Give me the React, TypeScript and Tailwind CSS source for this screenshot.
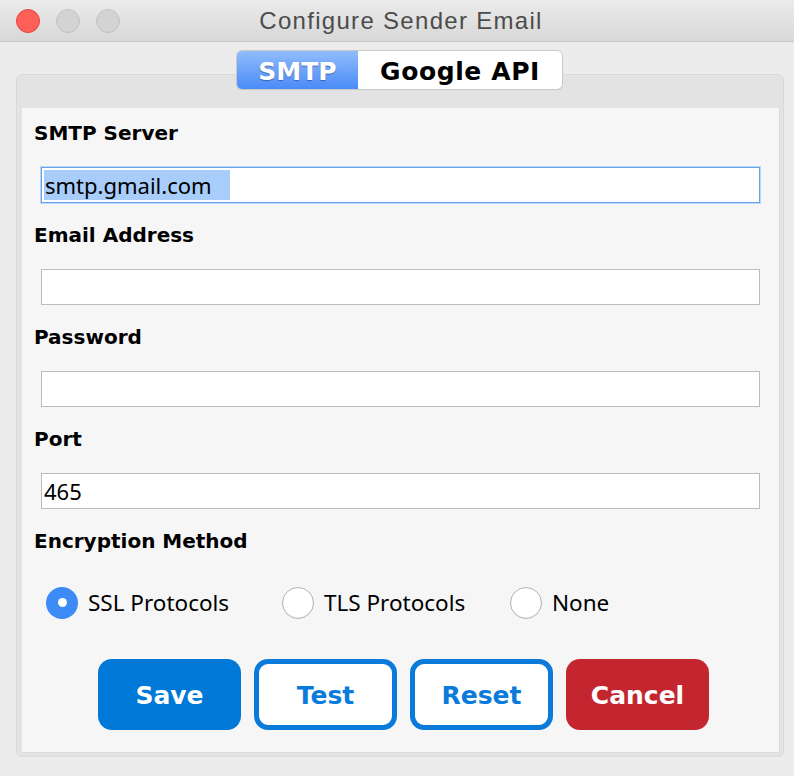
import React from "react";

const dv = { fontFamily: '"DejaVu Sans", Verdana, sans-serif' };
const noto = { fontFamily: '"Noto Sans", "Open Sans", sans-serif' };

function Field({ label, value, focused, selected }: { label: string; value?: string; focused?: boolean; selected?: boolean }) {
  return (
    <div className="mb-[20px]">
      <div className="h-[24px] px-[12px] text-[20px] leading-[24px] font-bold text-black" style={dv}>
        {label}
      </div>
      <div
        className={
          "mx-[19px] mt-[22px] h-[36px] bg-white flex items-center px-[2px] text-[22px] text-black " +
          (focused
            ? "border border-[#6aa2ea] shadow-[0_0_0_1px_#b9d5f8]"
            : "border border-[#bcbcbc]")
        }
        style={noto}
      >
        {value ? (
          selected ? (
            <span className="bg-[#a9cdfb] w-[186px] h-[30px] leading-[30px] pl-[1px]">{value}</span>
          ) : (
            <span className="leading-[30px]">{value}</span>
          )
        ) : null}
      </div>
    </div>
  );
}

function Radio({ label, checked, width }: { label: string; checked?: boolean; width?: string }) {
  return (
    <div className={"flex items-center gap-[10px] " + (width ?? "")}>
      {checked ? (
        <div className="w-[32px] h-[32px] rounded-full bg-[#3d8bf6] flex items-center justify-center">
          <div className="w-[9px] h-[9px] rounded-full bg-white" />
        </div>
      ) : (
        <div className="w-[32px] h-[32px] rounded-full bg-white border border-[#b3b3b3] shadow-[inset_0_-1px_1px_rgba(0,0,0,0.06)]" />
      )}
      <span className="text-[22.5px] text-black" style={noto}>
        {label}
      </span>
    </div>
  );
}

export default function App() {
  return (
    <div className="w-[794px] h-[776px] bg-[#ececec] flex flex-col overflow-hidden">
      {/* Title bar */}
      <div className="h-[42px] border-b border-[#c6c6c6] bg-gradient-to-b from-[#ebebeb] to-[#d8d8d8] flex items-center relative">
        <div className="flex items-center gap-[16px] pl-[16px]">
          <div className="w-[24px] h-[24px] rounded-full bg-[#fe5f57] border border-[#e2463f]" />
          <div className="w-[24px] h-[24px] rounded-full bg-[#d3d3d3] border border-[#c2c2c2]" />
          <div className="w-[24px] h-[24px] rounded-full bg-[#d3d3d3] border border-[#c2c2c2]" />
        </div>
        <div
          className="flex-1 text-center text-[24px] text-[#4c4c4c] pr-[112px] tracking-[1.3px]"
          style={{ fontFamily: '"Liberation Sans", Arial, sans-serif' }}
        >
          Configure Sender Email
        </div>
      </div>

      {/* Tabs */}
      <div className="mt-[9px] flex justify-center relative z-10">
        <div className="flex h-[38px] rounded-[5px] shadow-[0_0_0_1px_#c9c9c9,0_1px_1px_rgba(0,0,0,0.15)] overflow-hidden ml-[5px]" style={dv}>
          <div
            className="w-[121px] flex items-center justify-center pt-[3px] text-[25px] font-bold text-white bg-gradient-to-b from-[#90bcfb] to-[#4a8bf7]"
            style={{ textShadow: "0 1px 1px rgba(0,0,0,0.35)" }}
          >
            SMTP
          </div>
          <div className="w-[204px] flex items-center justify-center pt-[3px] text-[25px] font-bold text-black bg-white tracking-[0.6px]">
            Google API
          </div>
        </div>
      </div>

      {/* Panel */}
      <div className="-mt-[15px] ml-[16px] mr-[10px] h-[683px] rounded-[6px] border border-[#d9d9d9] bg-[#e3e3e3] pt-[33px] pl-[5px] pr-[3px] pb-[3px] flex">
        <div className="flex-1 bg-[#f6f6f6] border-r border-b border-[#dcdcdc] pt-[13px] flex flex-col">
          <Field label="SMTP Server" value="smtp.gmail.com" focused selected />
          <Field label="Email Address" />
          <Field label="Password" />
          <Field label="Port" value="465" />
          <div className="h-[24px] px-[12px] text-[20px] leading-[24px] font-bold text-black" style={dv}>
            Encryption Method
          </div>
          <div className="mt-[33px] ml-[24px] flex items-center">
            <Radio label="SSL Protocols" checked width="w-[236px]" />
            <Radio label="TLS Protocols" width="w-[228px]" />
            <Radio label="None" />
          </div>
          <div className="mt-[39px] ml-[76px] flex gap-[13px] text-[25px] font-bold" style={dv}>
            <button className="w-[143px] h-[71px] rounded-[14px] bg-[#0078d7] text-white pt-[2px]">Save</button>
            <button className="w-[143px] h-[71px] rounded-[14px] bg-white border-[5px] border-[#0a7bda] text-[#0a7bda] pt-[2px]">Test</button>
            <button className="w-[143px] h-[71px] rounded-[14px] bg-white border-[5px] border-[#0a7bda] text-[#0a7bda] pt-[2px]">Reset</button>
            <button className="w-[143px] h-[71px] rounded-[14px] bg-[#c4262f] text-white pt-[2px]">Cancel</button>
          </div>
        </div>
      </div>
    </div>
  );
}
